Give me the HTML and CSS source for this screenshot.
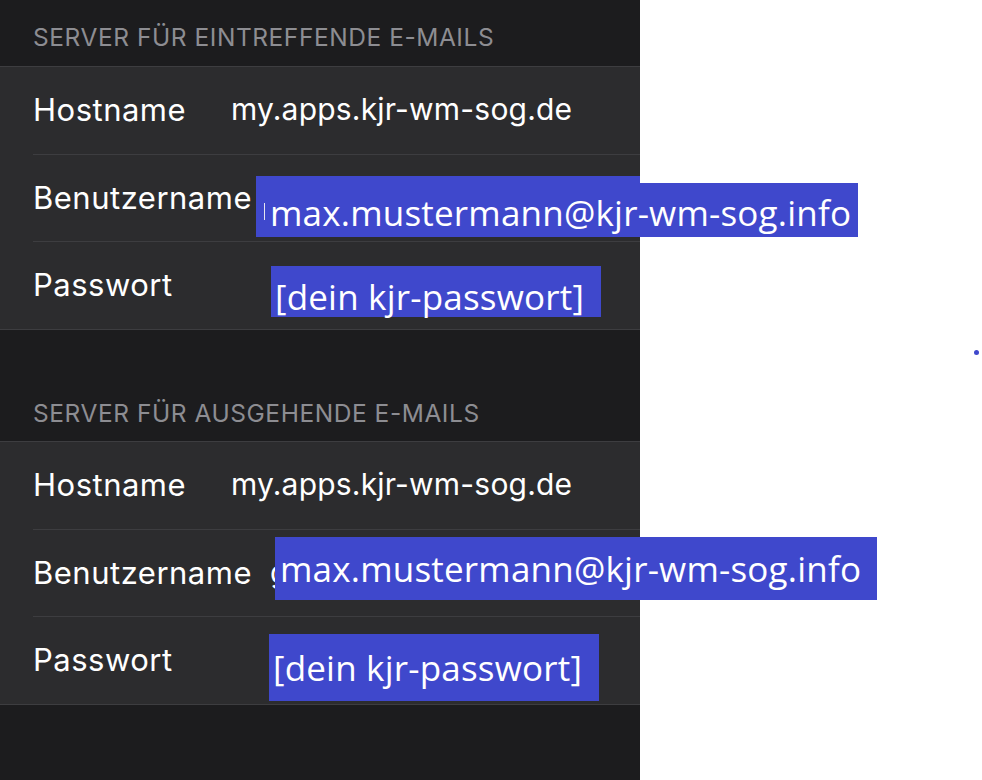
FILE: index.html
```html
<!DOCTYPE html>
<html lang="de">
<head>
<meta charset="utf-8">
<title>Mail-Server</title>
<link rel="stylesheet" href="styles.css">
</head>
<body>
<div class="page">
  <div class="panel">
    <div class="section-header first">SERVER FÜR EINTREFFENDE E-MAILS</div>
    <div class="group">
      <div class="row">
        <span class="label">Hostname</span>
        <span class="value">my.apps.kjr-wm-sog.de</span>
      </div>
      <div class="row">
        <span class="label">Benutzername</span>
        <span class="overlay box-user-in"><span class="caret"></span>max.mustermann@kjr-wm-sog.info</span>
      </div>
      <div class="row">
        <span class="label">Passwort</span>
        <span class="overlay box-pass-in">[dein kjr-passwort]</span>
      </div>
    </div>
    <div class="section-header second">SERVER FÜR AUSGEHENDE E-MAILS</div>
    <div class="group">
      <div class="row">
        <span class="label">Hostname</span>
        <span class="value">my.apps.kjr-wm-sog.de</span>
      </div>
      <div class="row">
        <span class="label">Benutzername</span>
        <span class="value value-hidden">g</span>
        <span class="overlay box-user-out">max.mustermann@kjr-wm-sog.info</span>
      </div>
      <div class="row">
        <span class="label">Passwort</span>
        <span class="overlay box-pass-out">[dein kjr-passwort]</span>
      </div>
    </div>
  </div>
  <span class="dot"></span>
</div>
</body>
</html>
```
FILE: styles.css
```css
html, body {
  margin: 0;
  padding: 0;
  background: #ffffff;
}

.page {
  position: relative;
  width: 982px;
  height: 780px;
  display: flex;
  overflow: hidden;
}

.panel {
  width: 640px;
  height: 780px;
  background: #1c1c1e;
  display: flex;
  flex-direction: column;
  font-family: Inter, "Liberation Sans", sans-serif;
}

.section-header {
  box-sizing: border-box;
  padding-left: 33px;
  font-size: 24.5px;
  line-height: 24px;
  color: #8d8d92;
  letter-spacing: 0.55px;
  white-space: nowrap;
}

.section-header.first {
  height: 66px;
  padding-top: 25px;
}

.section-header.second {
  height: 111px;
  padding-top: 71px;
}

.group {
  background: #2c2c2e;
  border-top: 1px solid #3d3d40;
  border-bottom: 1px solid #3d3d40;
}

.row {
  position: relative;
  height: 84.7px;
  padding-bottom: 2px;
  margin-left: 33px;
  display: flex;
  align-items: center;
  color: #ffffff;
}

.row + .row {
  border-top: 1px solid #3d3d40;
}

.label {
  width: 198px;
  flex: none;
  white-space: nowrap;
  font-size: 31px;
  letter-spacing: 0.5px;
}

.value {
  white-space: nowrap;
  font-size: 30px;
  letter-spacing: 0.2px;
}

.value-hidden {
  margin-left: 39px;
}

.overlay {
  position: absolute;
  box-sizing: border-box;
  background: #3f48cc;
  color: #ffffff;
  font-family: "Open Sans", "Noto Sans", sans-serif;
  font-size: 35px;
  line-height: 35px;
  letter-spacing: 0.2px;
  white-space: nowrap;
}

.box-user-in {
  left: 223px;
  top: 28px;
  width: 602px;
  height: 54px;
  padding: 12px 0 0 14px;
}

.box-user-in::before {
  content: "";
  position: absolute;
  left: 0;
  top: -7px;
  width: 384px;
  height: 7px;
  background: #3f48cc;
}

.caret {
  position: absolute;
  left: 8px;
  top: 20px;
  width: 1px;
  height: 17px;
  background: #e6e6f0;
}

.box-pass-in {
  left: 238px;
  top: 24px;
  width: 330px;
  height: 51px;
  padding: 13px 0 0 4px;
}

.box-user-out {
  left: 242px;
  top: 7px;
  width: 602px;
  height: 63px;
  padding: 14px 0 0 5px;
}

.box-pass-out {
  left: 236px;
  top: 17px;
  width: 330px;
  height: 67px;
  padding: 16px 0 0 4px;
}

.dot {
  position: absolute;
  left: 974px;
  top: 350px;
  width: 5px;
  height: 5px;
  border-radius: 50%;
  background: #3f48cc;
}
```
